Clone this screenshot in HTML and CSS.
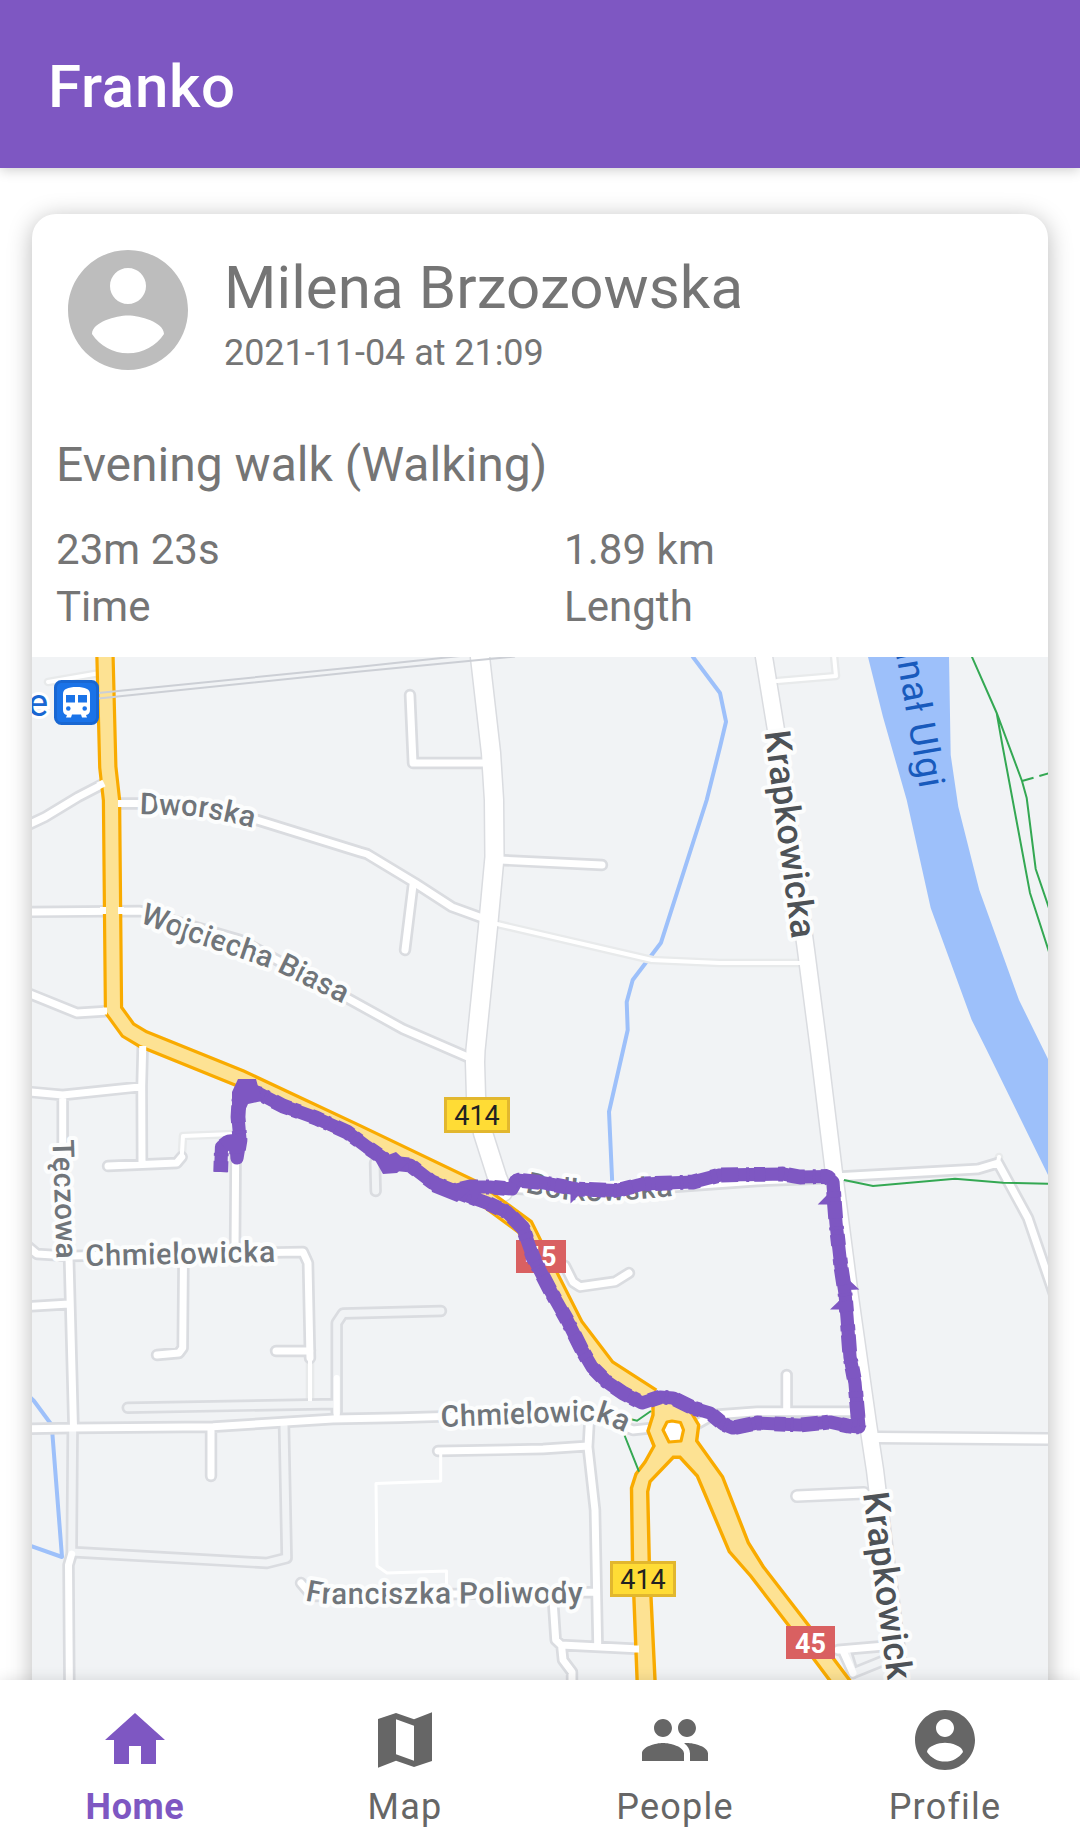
FILE: index.html
```html
<!DOCTYPE html>
<html lang="en">
<head>
<meta charset="utf-8">
<title>Franko</title>
<link rel="stylesheet" href="styles.css">
</head>
<body>
<div class="app">
  <header class="topbar"><h1 class="topbar-title">Franko</h1></header>

  <main class="feed">
    <article class="card">
      <div class="author">
        <svg class="avatar" viewBox="0 0 24 24"><path d="M12 2C6.48 2 2 6.48 2 12s4.48 10 10 10 10-4.48 10-10S17.52 2 12 2zm0 3c1.66 0 3 1.34 3 3s-1.34 3-3 3-3-1.34-3-3 1.34-3 3-3zm0 14.2c-2.5 0-4.71-1.28-6-3.22.03-1.99 4-3.08 6-3.08 1.99 0 5.97 1.09 6 3.08-1.29 1.94-3.5 3.22-6 3.22z"/></svg>
        <div class="author-text">
          <div class="name">Milena Brzozowska</div>
          <div class="date">2021-11-04 at 21:09</div>
        </div>
      </div>
      <h2 class="activity">Evening walk (Walking)</h2>
      <div class="stats">
        <div class="stat"><div>23m 23s</div><div>Time</div></div>
        <div class="stat"><div>1.89 km</div><div>Length</div></div>
      </div>
      <svg class="map" viewBox="32 657 1016 1023">
        <defs>
          <path id="hollow" d="M336.700 1412V1323L343 1313.500L441 1311M127.700 1407.700L336 1404M72.700 1430L71.700 1552L266.700 1563L286.700 1558L284 1426M375 1163L375.700 1191M846 1650L853 1673L890 1658"/>
          <path id="minor" d="M20 829L45 817L78 797L105 783M116 803.500H140L200 806L257 820L360 852L367 854L415 883L452 907L485 919M413 885L405 950M20 912L140 911L240 940L347 998L403 1029L470 1058M20 990L77 1013L109 1011M410 695L413 763H485M500 860L602 865
          M20 1091L62.700 1095L141.700 1086.700M142.700 1047L141.700 1086L142 1163M108 1166L176.700 1163L181.700 1157M62.700 1095V1143L69 1257L72 1370L73.500 1428M20 1240L37 1254L69 1256L303 1252L308 1263L310 1358M235.700 1150L235 1250M183.500 1258L182.700 1348L179 1353L157 1355M276 1351H310M20 1307L69 1304
          M20 1429L72 1428L213 1426.700L333 1419L400 1417.700L590 1412L633 1430L652 1428M211 1428V1476M71.700 1554L68.500 1565L69.500 1700M301 1583L312 1596L596 1592M438 1451L543 1449L588 1446M589.500 1420L588 1447L595 1510L597.700 1645M553 1600L555.700 1640L561 1645L640 1649M561.500 1645L563 1660L572 1672V1690
          M565 1266L573 1282L580 1286.700L615 1281.700L629 1273M503 1188L610 1194L673 1187L757 1181L833 1178M838 1176.700L978 1169L998 1163L1028 1218L1056 1300M697 1424L713 1415L757 1411.700H860M786.700 1375V1410M838 1650L885 1646M843 1651L853 1673"/>
          <path id="light" d="M497 924L652 960L720 963H802M777 681L836 676L833 645M48 682L100 673M181.700 1157L183 1136L233 1134M310 1360V1401M998 1163L999 1157"/>
          <path id="krap" d="M762.500 645L764 657L776 730L806 950L819 1050L834 1173L850 1297L868 1424L875 1470L901.500 1690"/>
          <path id="north" d="M479 645L480 657L491 753L494 800L494.500 857L488 927L475.500 1050L475 1062L476 1097L483 1133L497 1177L503 1192"/>
          <path id="wide" d="M876 1437.500L1060 1439M797 1496L864 1493"/>
          <path id="route45" d="M105 645V657L107.800 767L111.500 800L113.500 1010L128 1030L143 1039L240.500 1078.500L356.700 1133L471.700 1188L495 1205L525 1227L534 1245L575 1326L607 1368L652 1397"/>
          <path id="track" d="M220.700 1172L221.500 1147L228 1142L236 1141L237 1158L240 1140L238 1117L239 1100L245 1089L260 1094L283 1106L316 1118L347 1132L367 1147L390 1163L410 1165L432 1182L460 1193L487 1203L507 1212L523 1228L533 1257L550 1290L567 1320L582 1350L592 1367L607 1382L623 1393L642 1403L660 1397L673 1398L693 1408L710 1413L723 1424L733 1428L757 1423L800 1425L830 1422L848 1426L859 1427L858 1417L855 1383L850 1357L847 1317L845 1293L841 1267L836 1223L834 1197L833 1182L827 1176.500L800 1177L783 1174L720 1175L693 1182L643 1184L617 1190.500L577 1189L543 1182.700L517 1180L512 1189L490 1187L470 1187L453 1191"/>
          <path id="t-dworska" d="M139.500 814L192 816Q215 818 262 830"/>
          <path id="t-biasa" d="M139 922L180 938L272 969L352 1008"/>
          <path id="t-bolk" d="M525 1192Q565 1202 600 1201Q640 1200 690 1194"/>
          <path id="t-chm1" d="M85.500 1266L290 1261.500"/>
          <path id="t-chm2" d="M441 1427L592 1421Q602 1421 632 1436"/>
          <path id="t-fran" d="M305 1600Q318 1604 340 1604L600 1603"/>
        </defs>

        <rect x="32" y="657" width="1016" height="1023" fill="#f1f3f5"/>
        <path fill="#9dc0fa" d="M868 657L883 717L906.700 800L930.700 908L971.700 1020L986.700 1050L1048 1175V1059L1019 1000L979.300 890L958.300 806.700L950.700 755L949 657z"/>
        <path class="stream" d="M689 650L693 657L720 693L726 721.700L720 747L706.700 800L661 942.700L632.700 980L626.700 1002L627.700 1030L609 1111.700L612.300 1184M28 1395L34 1401L51.700 1425L62 1557L28 1545"/>
        <g class="casing">
          <use href="#light" class="light-casing"/>
          <use href="#hollow"/><use href="#minor"/><use href="#wide" stroke-width="14"/>
          <use href="#north" stroke-width="21"/><use href="#krap" stroke-width="19"/>
        </g>
        <g class="fill">
          <use href="#light" stroke-width="4"/>
          <use href="#hollow" stroke="#f1f3f5"/>
          <use href="#minor"/><use href="#wide" stroke-width="9"/>
          <path stroke-width="6" d="M336.700 1378V1416"/>
          <path stroke-width="3" d="M440.700 1453V1481L376 1483.500L377 1566L387 1573L446.500 1571V1590"/>
          <use href="#north" stroke-width="18"/><use href="#krap" stroke-width="16"/>
        </g>
        <path class="rail" d="M98 693L360 666.700L460 656M98 698.500L360 671.500L515 656.500"/>
        <path class="trail" d="M970 650L972 657L996.700 713L1022 781L1026.700 798L1035.700 869L1052 917M996.700 713L1002 743L1030 893L1052 961M844 1180L873 1186L955 1178.700L1003 1182.700L1048 1183.700"/>
        <path class="trail" stroke-dasharray="12 6" d="M1022 781L1050 773"/>

        <use href="#route45" class="route-edge"/>
        <path fill="#fde293" stroke="#f9ab00" stroke-width="3.400" d="M653 1402L653 1415L648 1431L654 1446L645 1462L636 1474L631.500 1488L632.500 1562L637.500 1690H655.500L649.300 1562L647.700 1491.700L650 1481.700L673.300 1457.300H680L697.300 1476L729.300 1551.700L750.700 1576L788.300 1625L837 1690H857L808.300 1625L763.300 1566.700L748.300 1542.700L722.500 1476.700L696.700 1440.700L698.700 1425L685 1402L668 1393z"/>
        <use href="#route45" class="route-fill"/>
        <path fill="#fff" stroke="#f9ab00" stroke-width="3.200" stroke-linejoin="round" d="M667 1422L672 1421L680.500 1422.500L683.500 1430L681 1441L669 1442L663 1430z"/>
        <path stroke="#fff" stroke-width="7" d="M98 786L104 783M118 803.500H123M100 910.500H106M118 910.500H124M103 1011H107M142.700 1046V1052M634 1649H639"/>
        <path class="rail" d="M98 693L116 691.200M98 698.500L116 696.700"/>
        <path class="trail" d="M630 1419L637 1420.700L651 1411M624 1434L639 1471.700"/>

        <g class="street">
          <text><textPath href="#t-dworska" textLength="115">Dworska</textPath></text>
          <text><textPath href="#t-biasa" textLength="220">Wojciecha Biasa</textPath></text>
          <text><textPath href="#t-bolk" textLength="149">Bołkowska</textPath></text>
          <text><textPath href="#t-chm1" textLength="190">Chmielowicka</textPath></text>
          <text><textPath href="#t-chm2" textLength="186">Chmielowicka</textPath></text>
          <text><textPath href="#t-fran" textLength="278">Franciszka Poliwody</textPath></text>
          <text transform="translate(52.500 1140) rotate(88)" textLength="119">Tęczowa</text>
        </g>
        <g class="street avenue">
          <text transform="translate(764.500 732) rotate(82.500)" textLength="209">Krapkowicka</text>
          <text transform="translate(863 1493.500) rotate(82.500)" textLength="209">Krapkowicka</text>
        </g>
        <text class="water" transform="translate(920 790) rotate(80)" text-anchor="end">Kanał Ulgi</text>
        <text class="station" x="28" y="715.500">e</text>
        <rect x="55.500" y="681.500" width="42" height="42" rx="6" fill="#1a73e8" stroke="#1967d2" stroke-width="3"/>
        <path fill="#fff" d="M63 694c0-5 5-7 13.500-7s13.500 2 13.500 7v16c0 3-1.500 4.500-4 5l1 2.500h-5l-1-3h-9l-1 3h-5l1-2.500c-2.500-.5-4-2-4-5z"/>
        <path fill="#1a73e8" d="M66 695h9v7.500h-9zM78 695h9v7.500h-9zM66 708.500a2.300 2.300 0 1 0 4.600 0a2.300 2.300 0 1 0-4.600 0zM82.400 708.500a2.300 2.300 0 1 0 4.600 0a2.300 2.300 0 1 0-4.600 0z"/>

        <g class="shield-yellow">
          <rect x="445.500" y="1098.500" width="63" height="33"/><text x="477" y="1124.500">414</text>
          <rect x="611.500" y="1562.500" width="63" height="33"/><text x="643" y="1588.500">414</text>
        </g>
        <g class="shield-red">
          <rect x="516" y="1240" width="50" height="33"/><text x="541" y="1266">45</text>
          <rect x="786" y="1626" width="49" height="33"/><text x="810.500" y="1652.500">45</text>
        </g>

        <use href="#track" class="track"/>
        <use href="#track" class="track track-rough"/>
        <path fill="#7e57c2" d="M817.700 1204.500L828 1194L831 1204.500zM848 1279L859.300 1289.500L848 1290zM830 1309.500L841 1299V1309.500zM570.500 1190V1203.500L582 1192zM375 1160L383 1174L397 1173L408 1163L396 1152zM232 1092L238 1079H256L262 1101L248 1104L243 1115L232 1112zM428 1175L432 1192L457 1202L470 1190z"/>
      </svg>
    </article>
  </main>

  <nav class="tabs">
    <a class="tab active"><svg viewBox="0 0 24 24"><path d="M10 20v-6h4v6h5v-8h3L12 3 2 12h3v8z"/></svg><span>Home</span></a>
    <a class="tab"><svg viewBox="0 0 24 24"><path d="M15 5.100L9 3 3 5.020v16.200l6-2.330 6 2.100 6-2.020V2.770L15 5.100zm0 13.790l-6-2.110V5.110l6 2.110v11.670z"/></svg><span>Map</span></a>
    <a class="tab"><svg viewBox="0 0 24 24"><path d="M16 11c1.660 0 2.990-1.340 2.990-3S17.660 5 16 5c-1.660 0-3 1.340-3 3s1.340 3 3 3zm-8 0c1.660 0 2.990-1.340 2.990-3S9.660 5 8 5C6.340 5 5 6.340 5 8s1.340 3 3 3zm0 2c-2.330 0-7 1.170-7 3.500V19h14v-2.500c0-2.330-4.670-3.500-7-3.500zm8 0c-.29 0-.62.02-.97.05 1.160.84 1.970 1.970 1.970 3.450V19h6v-2.500c0-2.330-4.670-3.500-7-3.500z"/></svg><span>People</span></a>
    <a class="tab"><svg viewBox="0 0 24 24"><path d="M12 2C6.480 2 2 6.480 2 12s4.480 10 10 10 10-4.480 10-10S17.520 2 12 2zm0 3c1.660 0 3 1.340 3 3s-1.340 3-3 3-3-1.340-3-3 1.340-3 3-3zm0 14.200c-2.500 0-4.710-1.280-6-3.220.03-1.990 4-3.080 6-3.080 1.990 0 5.970 1.090 6 3.080-1.290 1.940-3.500 3.220-6 3.220z"/></svg><span>Profile</span></a>
  </nav>
</div>
</body>
</html>
```
FILE: styles.css
```css
* { box-sizing: border-box; }
body { margin: 0; background: #fff; font-family: Roboto, "Noto Sans", sans-serif; color: #757575; }
h1, h2 { margin: 0; font-weight: 400; }

.app { display: flex; flex-direction: column; width: 1080px; height: 1848px; overflow: hidden; }

.topbar { position: relative; z-index: 2; flex: none; height: 168px; padding: 51px 48px 0; background: #7e57c2; box-shadow: 0 2px 12px rgba(0, 0, 0, .2); }
.topbar-title { font-size: 60px; line-height: 72px; font-weight: 500; letter-spacing: .7px; color: #fff; }

.feed { flex: 1; min-height: 0; padding: 46px 32px 0; overflow: hidden; }
.card { height: 1600px; border-radius: 24px; overflow: hidden; background: #fff; box-shadow: 0 4px 24px rgba(0, 0, 0, .28); }
.author { display: flex; gap: 24px; height: 192px; padding: 24px 24px 0; }
.avatar { flex: none; width: 144px; height: 144px; fill: #bdbdbd; }
.author-text { padding-top: 15px; }
.name { font-size: 60px; line-height: 70px; letter-spacing: .1px; }
.date { font-size: 36px; line-height: 42px; margin-top: 9px; letter-spacing: -.05px; }
.activity { padding-left: 24px; margin-top: 31px; font-size: 48px; line-height: 56px; }
.stats { display: grid; grid-template-columns: 1fr 1fr; height: 164px; padding-top: 28px; }
.stat { padding-left: 24px; font-size: 42px; line-height: 57px; letter-spacing: .05px; }
.map { display: block; width: 1016px; height: 1023px; }

.casing { fill: none; stroke: #dadce0; stroke-width: 12.4; stroke-linejoin: round; stroke-linecap: round; }
.light-casing { stroke: #e8eaeb; stroke-width: 8.6; }
.fill { fill: none; stroke: #fff; stroke-width: 7; stroke-linejoin: round; stroke-linecap: round; }
.stream { fill: none; stroke: #9dc0fa; stroke-width: 4; stroke-linejoin: round; }
.rail { fill: none; stroke: #cccfd5; stroke-width: 2; }
.trail { fill: none; stroke: #34a853; stroke-width: 2; }
.route-edge { fill: none; stroke: #f9ab00; stroke-width: 19.4; }
.route-fill { fill: none; stroke: #fde293; stroke-width: 13; }
.track { fill: none; stroke: #7e57c2; stroke-width: 13.2; stroke-linejoin: round; }
.track-rough { stroke-width: 14.8; stroke-dasharray: 11 5 3 8 17 4 6 13; stroke-linejoin: bevel; }

.street { font-size: 30px; font-weight: 500; fill: #70757a; stroke: #fcfdfd; stroke-width: 8px; stroke-linejoin: round; paint-order: stroke; }
.avenue { font-size: 36px; fill: #4d5257; }
.water { font-size: 37px; letter-spacing: .9px; fill: #185abc; }
.station { font-size: 38px; fill: #1967d2; stroke: #fff; stroke-width: 6px; paint-order: stroke; }
.shield-yellow { fill: #ffdc35; stroke: #e2b72e; stroke-width: 3px; font-size: 27px; text-anchor: middle; }
.shield-yellow text { fill: #222; stroke: none; }
.shield-red { fill: #d96061; font-size: 27px; font-weight: 700; text-anchor: middle; }
.shield-red text { fill: #fff; }

.tabs { position: relative; z-index: 2; flex: none; display: grid; grid-template-columns: repeat(4, 1fr); height: 168px; background: #fff; box-shadow: 0 0 14px rgba(0, 0, 0, .12); }
.tab { display: flex; flex-direction: column; align-items: center; padding-top: 24px; font-size: 36px; line-height: 42px; letter-spacing: 1.2px; color: #666; }
.tab svg { width: 72px; height: 72px; margin-bottom: 10px; fill: currentColor; }
.active { color: #7e57c2; font-weight: 700; letter-spacing: .6px; }
```
